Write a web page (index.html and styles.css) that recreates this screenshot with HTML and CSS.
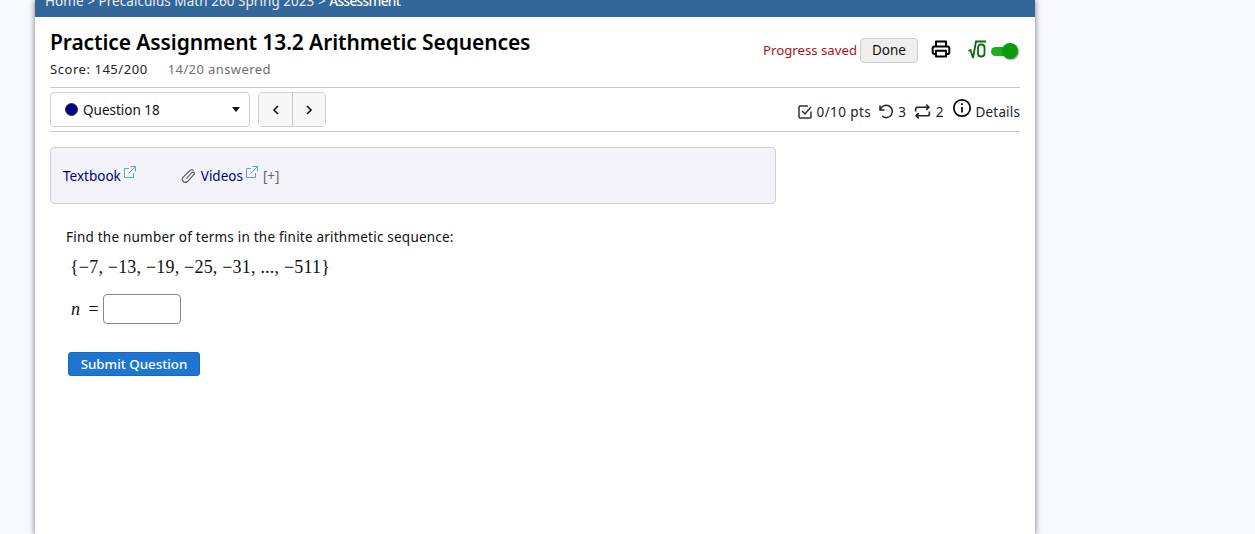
FILE: index.html
```html
<!DOCTYPE html>
<html lang="en">
<head>
<meta charset="utf-8">
<title>Practice Assignment 13.2 Arithmetic Sequences</title>
<link rel="stylesheet" href="styles.css">
</head>
<body>
<main class="card">
  <nav class="crumbs"><span class="crumb-line">Home &gt; Precalculus Math 260 Spring 2023 &gt; <b>Assessment</b></span></nav>
  <div class="content">
    <header class="head">
      <div>
        <h1>Practice Assignment 13.2 Arithmetic Sequences</h1>
        <div class="score"><span>Score: 145/200</span><span class="answered">14/20 answered</span></div>
      </div>
      <div class="head-tools">
        <span class="saved">Progress saved</span>
        <button class="done">Done</button>
        <svg class="print" width="20" height="20" viewBox="0 0 24 24" fill="none" stroke="#000" stroke-width="2.4" stroke-linejoin="round"><path d="M6 9V3h12v6"/><path d="M6 18H4a2 2 0 0 1-2-2v-5a2 2 0 0 1 2-2h16a2 2 0 0 1 2 2v5a2 2 0 0 1-2 2h-2"/><rect x="6" y="14" width="12" height="7"/></svg>
        <span class="sqrt"><svg width="20" height="20" viewBox="0 0 20 20" fill="none" stroke="#0a6b0a" stroke-width="1.8"><path d="M0.5 11l2-1 2.5 8L8 1.5h10"/><rect x="10" y="4.5" width="6.5" height="12" rx="3"/></svg></span>
        <span class="toggle"><span class="knob"></span></span>
      </div>
    </header>
    <div class="qbar">
      <div class="qleft">
        <div class="select"><span class="dot"></span><span class="qname">Question 18</span><span class="caret"></span></div>
        <div class="pager">
          <button class="page-btn"><svg width="10" height="12" viewBox="0 0 10 12" fill="none" stroke="#111" stroke-width="1.6"><path d="M7 2L3 6l4 4"/></svg></button>
          <button class="page-btn"><svg width="10" height="12" viewBox="0 0 10 12" fill="none" stroke="#111" stroke-width="1.6"><path d="M3 2l4 4-4 4"/></svg></button>
        </div>
      </div>
      <div class="qmeta">
        <svg width="16" height="16" viewBox="0 0 16 16" fill="none" stroke="#333" stroke-width="1.5"><path d="M14 7.5V13a1 1 0 0 1-1 1H3a1 1 0 0 1-1-1V3a1 1 0 0 1 1-1h8"/><path d="M5 7l3 3 6-7"/></svg>
        <span class="m-pts">0/10 pts</span>
        <svg class="m-undo" width="16" height="16" viewBox="0 0 16 16" fill="none" stroke="#222" stroke-width="1.5"><path d="M2 2.5v4.5h4.5"/><path d="M2.2 6.8A6.2 6.2 0 1 1 4 13"/></svg>
        <span class="m-three">3</span>
        <svg class="m-retry" width="17" height="17" viewBox="0 0 16 16" fill="none" stroke="#222" stroke-width="1.5"><path d="M1.5 8V6a2 2 0 0 1 2-2H14"/><path d="M11.5 1.5L14 4l-2.5 2.5"/><path d="M14.5 8v2a2 2 0 0 1-2 2H2"/><path d="M4.5 9.5L2 12l2.5 2.5"/></svg>
        <span class="m-two">2</span>
        <svg class="m-info" width="20" height="20" viewBox="0 0 20 20" fill="none" stroke="#000" stroke-width="1.7"><circle cx="10" cy="10" r="8.2"/><path d="M10 9v5.5"/><path d="M10 5.2v1.8"/></svg>
        <span class="m-details">Details</span>
      </div>
    </div>
    <section class="resources">
      <a class="res-link">Textbook<svg class="ext" width="12" height="12" viewBox="0 0 12 12" fill="none" stroke="#6a9ddc"><path d="M5 2.5H.5v9h9V7"/><path d="M4.5 7.5L11 1"/><path d="M6.5.5h5v5"/></svg></a>
      <span class="res-vid">
        <svg class="clip" width="16" height="16" viewBox="0 0 16 16" fill="none" stroke="#555" stroke-width="1.1"><path d="M5.5 10.5L11 4.5a1.4 1.4 0 0 1 2 2L6.5 13.5a3 3 0 0 1-4.3-4.3L9 2.5a2.6 2.6 0 0 1 3.7.2"/></svg>
        <a class="res-link">Videos<svg class="ext" width="12" height="12" viewBox="0 0 12 12" fill="none" stroke="#6a9ddc"><path d="M5 2.5H.5v9h9V7"/><path d="M4.5 7.5L11 1"/><path d="M6.5.5h5v5"/></svg></a>
        <span class="plus">[+]</span>
      </span>
    </section>
    <section class="question">
      <p class="prompt">Find the number of terms in the finite arithmetic sequence:</p>
      <p class="math seq">{−7, −13, −19, −25, −31, ..., −511}</p>
      <div class="answer"><span class="math ans-label"><i>n</i> =</span><input class="ans-input" type="text" aria-label="n"></div>
      <button class="submit">Submit Question</button>
    </section>
  </div>
</main>
</body>
</html>
```
FILE: styles.css
```css
* { box-sizing: border-box; }
html, body { margin: 0; height: 534px; overflow: hidden; }
body {
  background: #f8f8ff;
  font-family: "Noto Sans", "DejaVu Sans", sans-serif;
  font-size: 14px;
  color: #111;
}
.card {
  width: 1000px;
  height: 534px;
  margin-left: 35px;
  background: #fff;
  box-shadow: 0 0 6px rgba(0, 0, 0, 0.55);
}
.crumbs {
  height: 17px;
  background: #336699;
  color: #e8eef5;
  padding-left: 10px;
  display: flex;
  align-items: flex-end;
  overflow: hidden;
  font-size: 13.5px;
}
.crumb-line { white-space: nowrap; line-height: 22px; margin-bottom: 5px; letter-spacing: 0.05px; }
.crumb-line b { color: #fff; font-weight: 500; letter-spacing: -0.6px; }
.content { padding: 0 15px; }
.head {
  display: flex;
  justify-content: space-between;
  height: 71px;
  border-bottom: 1px solid #c8c8c8;
  padding-top: 10px;
}
h1 { margin: 0; font-size: 21px; line-height: 30px; font-weight: 600; color: #000; letter-spacing: -0.1px; }
.score { display: flex; gap: 20px; margin-top: 3px; font-size: 13px; line-height: 18px; color: #222; letter-spacing: 0.55px; }
.answered { color: #6f6f6f; letter-spacing: 0.4px; }
.head-tools { display: flex; align-items: center; height: 46px; padding-right: 4px; }
.saved { color: #b01212; font-size: 13.2px; margin-right: 3px; }
.done {
  width: 58px; height: 25px; padding: 0;
  font: inherit; font-size: 13.5px; color: #111;
  background: #eeeeee; border: 1px solid #cfcfcf; border-radius: 4px;
}
.print { margin-left: 13px; margin-top: -3px; margin-right: 1px; }
.sqrt { display: flex; margin-left: 16px; }
.toggle {
  position: relative; width: 25px; height: 9px; margin-left: 3px; margin-top: 2px;
  background: #1bb01b; border-radius: 5px;
}
.knob {
  position: absolute; right: -2px; top: -4px;
  width: 16px; height: 16px; border-radius: 50%;
  background: #0a9a0a; box-shadow: 1px 1px 2px rgba(0,0,0,.4);
}
.qbar {
  display: flex; justify-content: space-between; align-items: center;
  height: 44px; border-bottom: 1px solid #c8c8c8;
}
.qleft { display: flex; gap: 8px; align-items: center; }
.select {
  display: flex; align-items: center;
  width: 200px; height: 35px; padding: 0 9px 0 14px;
  border: 1px solid #d0d0d0; border-radius: 4px; background: #fff;
}
.dot { width: 13px; height: 13px; border-radius: 50%; background: #00008b; border: 1px solid #333; margin-right: 5px; }
.qname { flex: 1; font-size: 13.5px; }
.caret { border-left: 4px solid transparent; border-right: 4px solid transparent; border-top: 5px solid #111; }
.pager { display: flex; height: 35px; border: 1px solid #d0d0d0; border-radius: 4px; overflow: hidden; }
.page-btn { width: 33px; padding: 0; background: #f7f7f7; border: 0; display: flex; align-items: center; justify-content: center; }
.page-btn + .page-btn { border-left: 1px solid #c8c8c8; }
.qmeta { display: flex; align-items: center; font-size: 13.5px; color: #222; margin-top: 4px; }
.m-pts { margin-left: 4px; margin-right: 7px; letter-spacing: 0.4px; }
.m-undo { margin-top: -2px; }
.m-three { margin-left: 4px; }
.m-two { margin-left: 5px; }
.m-retry { margin-left: 8px; }
.m-info { margin-left: 8px; margin-right: 4px; margin-top: -7px; }
.m-details { letter-spacing: 0.15px; }
.resources {
  display: flex; align-items: center; gap: 46px;
  width: 726px; height: 57px; margin-top: 15px; padding-left: 12px;
  background: #f3f3f9; border: 1px solid #cfcfd6; border-radius: 4px;
}
.res-link { color: #000080; font-size: 13.5px; }
.ext { margin-left: 3px; vertical-align: 3px; }
.res-vid { display: flex; align-items: center; }
.clip { margin-right: 4px; margin-left: -1px; }
.plus { color: #666; margin-left: 5px; font-size: 13.5px; }
.question { padding: 24px 0 0 16px; }
.prompt { margin: 0; font-size: 13.5px; line-height: 19px; letter-spacing: 0.22px; }
.math { font-family: "Liberation Serif", serif; font-size: 18px; color: #111; }
.seq { margin: 8px 0 0 4px; line-height: 24px; letter-spacing: 0.2px; }
.answer { display: flex; align-items: center; gap: 4px; margin: 15px 0 0 5px; }
.ans-label { word-spacing: 3px; letter-spacing: 0.5px; }
.ans-input { width: 78px; height: 30px; border: 1px solid #888; border-radius: 4px; background: #fff; }
.submit {
  display: block; width: 132px; height: 24px; margin: 28px 0 0 2px; padding: 0;
  font: inherit; font-size: 13.3px; font-weight: 500; color: #fff;
  background: #1f76d2; border: 1px solid #1a68bd; border-radius: 3px;
}
```
